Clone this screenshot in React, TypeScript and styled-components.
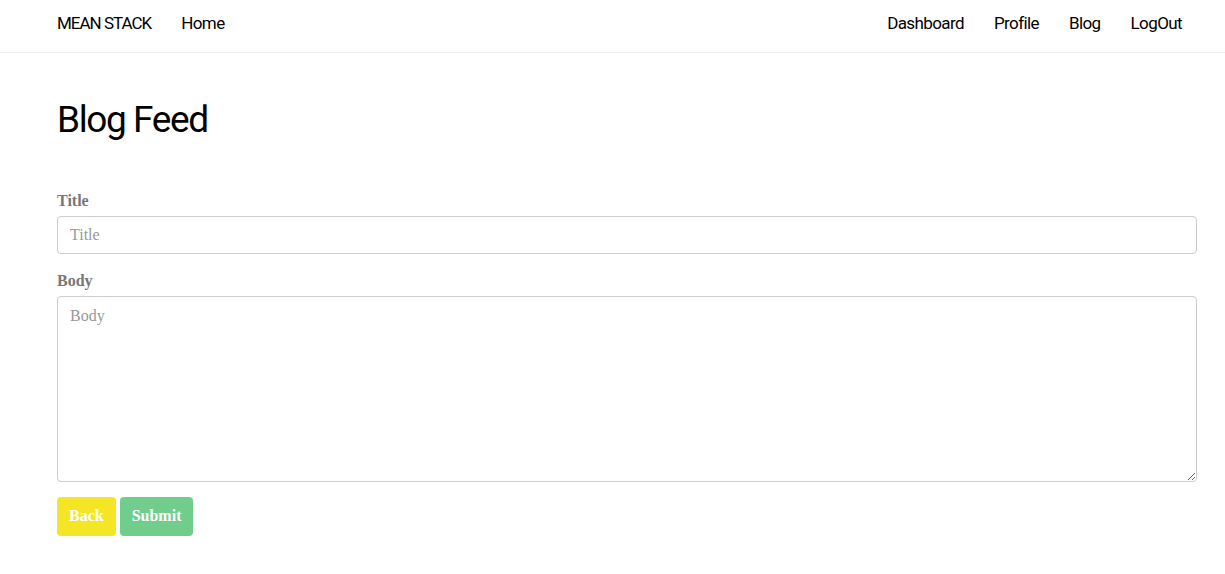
import React from "react";
import styled, { createGlobalStyle } from "styled-components";

const serif = `"Liberation Serif", "DejaVu Serif", serif`;
const condensed = `Roboto, "Liberation Sans", sans-serif`;

const Global = createGlobalStyle`
  * { box-sizing: border-box; }
  html, body { margin: 0; padding: 0; background: #fff; }
  body { font-family: ${serif}; color: #777; }
`;

const Nav = styled.nav`
  height: 53px;
  border-bottom: 1px solid #eee;
  background: #fff;
`;

const NavInner = styled.div`
  margin-left: 57px;
  width: 1140px;
  height: 52px;
  padding-bottom: 6px;
  display: flex;
  align-items: center;
  justify-content: space-between;
`;

const Group = styled.div`
  display: flex;
  align-items: center;
`;

const Brand = styled.a`
  font-family: ${condensed};
  font-size: 17px;
  letter-spacing: -1px;
  color: #000;
  text-decoration: none;
  margin-right: 30px;
`;

const NavLink = styled.a<{ $first?: boolean }>`
  font-family: ${condensed};
  font-size: 17px;
  letter-spacing: -0.6px;
  color: #000;
  text-decoration: none;
  padding: 0 15px;
  padding-left: ${(p) => (p.$first ? "0" : "15px")};
`;

const Main = styled.main`
  margin-left: 57px;
  width: 1140px;
`;

const Heading = styled.h1`
  font-family: ${condensed};
  font-weight: 400;
  font-size: 37px;
  letter-spacing: -1.4px;
  color: #000;
  margin: 47px 0 50px;
  line-height: 1.1;
`;

const Field = styled.div`
  display: flex;
  flex-direction: column;
  margin-bottom: 17px;
`;

const Label = styled.label`
  font-weight: 700;
  font-size: 16px;
  color: #777;
  margin-bottom: 5px;
  line-height: 20px;
`;

const Input = styled.input`
  height: 38px;
  border: 1px solid #ccc;
  border-radius: 4px;
  padding: 6px 12px;
  font-family: ${serif};
  font-size: 16px;
  color: #777;
  &::placeholder { color: #999; }
`;

const TextArea = styled.textarea`
  height: 186px;
  border: 1px solid #ccc;
  border-radius: 4px;
  padding: 10px 12px;
  font-family: ${serif};
  font-size: 16px;
  color: #777;
  resize: vertical;
  &::placeholder { color: #999; }
`;

const Buttons = styled.div`
  display: flex;
  gap: 4px;
  margin-top: -2px;
`;

const Button = styled.button<{ $bg: string }>`
  height: 39px;
  padding: 0 12px;
  border: none;
  border-radius: 4px;
  background: ${(p) => p.$bg};
  color: #fff;
  font-family: ${serif};
  font-weight: 700;
  font-size: 16px;
  cursor: pointer;
`;

export default function App() {
  return (
    <>
      <Global />
      <Nav>
        <NavInner>
          <Group>
            <Brand href="#">MEAN STACK</Brand>
            <NavLink href="#" $first>Home</NavLink>
          </Group>
          <Group>
            <NavLink href="#">Dashboard</NavLink>
            <NavLink href="#">Profile</NavLink>
            <NavLink href="#">Blog</NavLink>
            <NavLink href="#">LogOut</NavLink>
          </Group>
        </NavInner>
      </Nav>
      <Main>
        <Heading>Blog Feed</Heading>
        <Field>
          <Label>Title</Label>
          <Input placeholder="Title" />
        </Field>
        <Field>
          <Label>Body</Label>
          <TextArea placeholder="Body" />
        </Field>
        <Buttons>
          <Button $bg="#f5e625">Back</Button>
          <Button $bg="#71cd8b">Submit</Button>
        </Buttons>
      </Main>
    </>
  );
}
